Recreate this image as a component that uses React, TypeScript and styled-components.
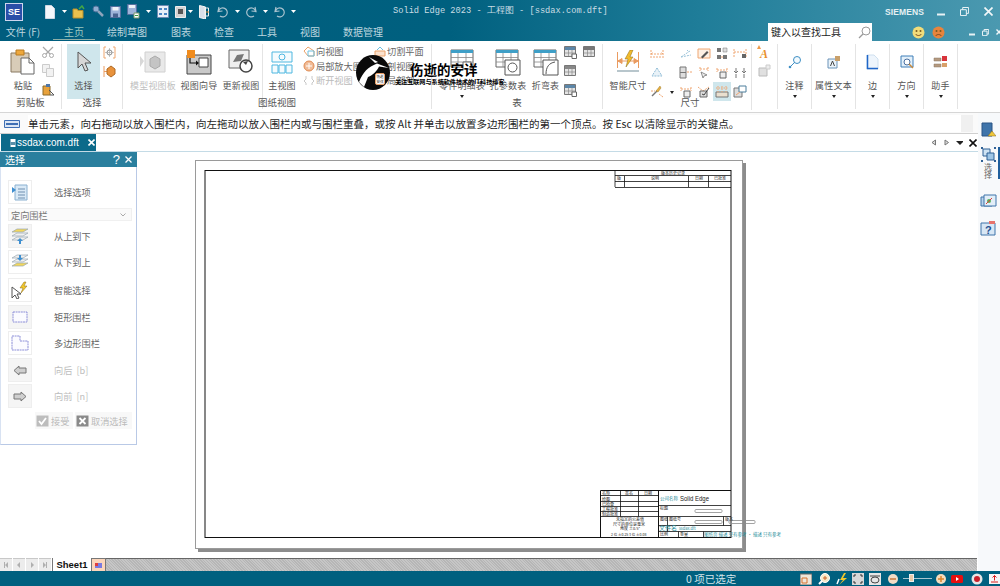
import React from "react";
import styled, { createGlobalStyle } from "styled-components";

const CJK = `"Noto Sans CJK SC", "Liberation Sans", sans-serif`;

const GlobalStyle = createGlobalStyle`
  html, body { margin: 0; padding: 0; background: #fff; }
  body { font-family: ${CJK}; }
`;

const Screen = styled.div`
  position: relative;
  width: 1000px;
  height: 586px;
  overflow: hidden;
  display: flex;
  flex-direction: column;
  background: #fff;
`;

/* title bar */
const TitleBar = styled.header`
  height: 41px;
  flex: none;
  display: flex;
  flex-direction: column;
  color: #fff;
  background: linear-gradient(90deg, #005d7e 0%, #00607f 45%, #1f7d99 70%, #4b99b0 100%);
`;
const TitleTop = styled.div`
  position: relative;
  height: 23px;
  display: flex;
  align-items: center;
`;
const Logo = styled.div`
  width: 18px;
  height: 18px;
  margin: 0 22px 0 5px;
  flex: none;
  box-sizing: border-box;
  border: 1px solid #cdd6ee;
  background: #2a4ea8;
  color: #fff;
  font: bold 9px/16px "Liberation Sans", sans-serif;
  text-align: center;
`;
const QuickSlot = styled.span<{ $w: number }>`
  width: ${(p) => p.$w}px;
  flex: none;
  display: flex;
  align-items: center;
`;
const Title = styled.div`
  position: absolute;
  left: 393px;
  top: 5px;
  font: 8.7px/13px "Liberation Mono", monospace;
  color: #c9dde4;
  white-space: pre;
`;
const Siemens = styled.span`
  margin-left: auto;
  font: bold 8.5px "Liberation Sans", sans-serif;
  letter-spacing: 0.1px;
  color: #e6f0f3;
`;
const WinControls = styled.div<{ $gap: number; $ml: number; $mr?: number }>`
  display: flex;
  align-items: center;
  gap: ${(p) => p.$gap}px;
  margin: 0 ${(p) => p.$mr ?? 0}px 0 ${(p) => p.$ml}px;
`;
const TitleBottom = styled.div`
  height: 18px;
  display: flex;
  align-items: center;
`;
const TabLabel = styled.span<{ $active?: boolean; $w: number; $ml: number }>`
  position: relative;
  width: ${(p) => p.$w}px;
  margin-left: ${(p) => p.$ml}px;
  flex: none;
  font-size: 10px;
  line-height: 18px;
  text-align: center;
  white-space: nowrap;
  color: ${(p) => (p.$active ? "#9cc8c0" : "#bcd6df")};
  ${(p) =>
    p.$active &&
    `&::after {
      content: "";
      position: absolute;
      left: 0;
      right: 0;
      bottom: 1px;
      height: 1px;
      background: #8fb0a8;
    }`}
`;
const SearchBox = styled.div`
  margin-left: auto;
  width: 104px;
  height: 18px;
  box-sizing: border-box;
  background: #fff;
  color: #222;
  font-size: 10px;
  line-height: 18px;
  padding-left: 3px;
  display: flex;
  align-items: center;
  justify-content: space-between;
  padding-right: 1px;
  flex: none;
`;
const Smileys = styled.div`
  margin-left: 40px;
  display: flex;
  align-items: center;
  gap: 7px;
  width: 88px;
  flex: none;
`;

/* ribbon */
const Ribbon = styled.nav`
  height: 71px;
  flex: none;
  box-sizing: border-box;
  padding-top: 3px;
  display: flex;
  background: #fff;
`;
const Group = styled.section<{ $w: number }>`
  width: ${(p) => p.$w}px;
  height: 65px;
  flex: none;
  box-sizing: border-box;
  display: flex;
  flex-direction: column;
  border-right: 1px solid #e4e4e4;
`;
const GroupBody = styled.div<{ $pad?: number }>`
  height: 52px;
  display: flex;
  padding-left: ${(p) => p.$pad ?? 0}px;
`;
const GroupLabel = styled.div`
  height: 13px;
  font-size: 9.5px;
  line-height: 13px;
  text-align: center;
  color: #555;
`;
const Tool = styled.div<{ $w: number; $active?: boolean; $after?: number; $dim?: boolean }>`
  width: ${(p) => p.$w}px;
  height: 55px;
  flex: none;
  margin-right: ${(p) => p.$after ?? 0}px;
  display: flex;
  flex-direction: column;
  align-items: center;
  background: ${(p) => (p.$active ? "#cfe6ec" : "transparent")};
  color: ${(p) => (p.$dim ? "#c0c0c0" : "#555")};
`;
const ToolIcon = styled.div`
  height: 32px;
  margin-top: 2px;
  display: flex;
  align-items: center;
  justify-content: center;
`;
const ToolLabel = styled.div`
  height: 14px;
  margin-top: 1px;
  font-size: 9px;
  line-height: 14px;
  letter-spacing: 0.2px;
  white-space: nowrap;
`;
const Caret = styled.i`
  display: block;
  margin-top: 2px;
  width: 0;
  height: 0;
  border-left: 2.5px solid transparent;
  border-right: 2.5px solid transparent;
  border-top: 3px solid #222;
`;
const SideIcons = styled.div<{ $w: number; $left: number; $gap: number }>`
  width: ${(p) => p.$w}px;
  margin-left: ${(p) => p.$left}px;
  flex: none;
  display: flex;
  flex-direction: column;
  align-items: center;
  padding-top: 2px;
  gap: ${(p) => p.$gap}px;
`;
const VSep = styled.div<{ $left: number; $right: number }>`
  width: 1px;
  height: 65px;
  flex: none;
  background: #e4e4e4;
  margin: 0 ${(p) => p.$right}px 0 ${(p) => p.$left}px;
`;
const ViewList = styled.div<{ $w: number }>`
  width: ${(p) => p.$w}px;
  flex: none;
  display: flex;
  flex-direction: column;
`;
const ViewItem = styled.div<{ $dim?: boolean }>`
  height: 14.5px;
  display: flex;
  align-items: center;
  gap: 1px;
  font-size: 9.2px;
  white-space: nowrap;
  color: ${(p) => (p.$dim ? "#bbb" : "#666")};
`;
const DimGrid = styled.div`
  flex: none;
  margin-left: 2px;
  display: grid;
  grid-template-columns: 18px 11px 18px 18px 18px 18px;
  grid-auto-rows: 19px;
`;
const DimCell = styled.div<{ $on?: boolean }>`
  display: flex;
  align-items: center;
  justify-content: center;
  background: ${(p) => (p.$on ? "#cfe6ec" : "transparent")};
`;
const TextStyles = styled.div`
  margin-left: 2px;
  width: 24px;
  flex: none;
  height: 65px;
  border-left: 1px solid #e4e4e4;
  display: flex;
  flex-direction: column;
  align-items: center;
  gap: 4px;
  padding-top: 1px;
`;

/* workspace */
const Workspace = styled.div`
  flex: 1;
  display: flex;
  min-height: 0;
  border-top: 1px solid #d6d6d6;
`;
const MainColumn = styled.div`
  width: 978px;
  flex: none;
  display: flex;
  flex-direction: column;
`;
const CommandBar = styled.div`
  height: 21px;
  flex: none;
  box-sizing: border-box;
  display: flex;
  align-items: flex-start;
  padding: 2px 5px 0 4px;
  border-bottom: 1px solid #cfcfcf;
  background: #fafafa;
`;
const CommandIcon = styled.div`
  width: 24px;
  height: 17px;
  flex: none;
  display: flex;
  align-items: center;
`;
const CommandText = styled.div`
  flex: 1;
  height: 17px;
  display: flex;
  justify-content: space-between;
  background: #fff;
  color: #1e1e1e;
  font-size: 10.5px;
  line-height: 17px;
  white-space: nowrap;
`;
const CommandScroll = styled.span`
  width: 12px;
  background: #f0f0f0;
`;
const DocBar = styled.div`
  height: 18px;
  flex: none;
  box-sizing: border-box;
  display: flex;
  align-items: flex-end;
  padding-left: 1px;
  background: #fff;
  border-bottom: 1px solid #c4dbe6;
`;
const DocTab = styled.div`
  width: 95px;
  height: 17px;
  box-sizing: border-box;
  display: flex;
  align-items: center;
  gap: 1px;
  padding: 0 1px 0 9px;
  background: #0c6a8a;
  color: #fff;
  font: 10px "Liberation Sans", sans-serif;
`;
const DocClose = styled.span`
  margin-left: auto;
  display: flex;
`;
const DocControls = styled.div`
  margin-left: auto;
  height: 17px;
  display: flex;
  align-items: center;
  gap: 6px;
  padding-right: 1px;
`;
const MainRow = styled.div`
  flex: 1;
  display: flex;
  min-height: 0;
`;

/* selection panel */
const Panel = styled.aside`
  width: 137px;
  height: 293px;
  flex: none;
  box-sizing: border-box;
  border: 1px solid #b9c9e6;
  border-top: none;
  border-left-color: #d8e2f2;
  background: #fff;
`;
const PanelHead = styled.div`
  height: 15px;
  margin-left: -1px;
  margin-right: -1px;
  display: flex;
  align-items: center;
  padding: 0 5px;
  gap: 5px;
  background: #2a7f9e;
  color: #fff;
  font-size: 10px;
`;
const PanelTitle = styled.span`
  margin-right: auto;
`;
const HeadGlyph = styled.span`
  font: 13px/15px "Liberation Sans", sans-serif;
`;
const PanelBody = styled.div`
  padding: 13px 4px 0 7px;
`;
const PanelRow = styled.div<{ $mt: number; $dim?: boolean }>`
  height: 24px;
  margin-top: ${(p) => p.$mt}px;
  display: flex;
  align-items: center;
  gap: 22px;
  font-size: 9.2px;
  white-space: pre;
  color: ${(p) => (p.$dim ? "#bdbdbd" : "#666")};
`;
const PanelIcon = styled.div<{ $flat?: boolean }>`
  width: 24px;
  height: 24px;
  flex: none;
  box-sizing: border-box;
  display: flex;
  align-items: center;
  justify-content: center;
  background: ${(p) => (p.$flat ? "#f5f5f5" : "#fff")};
  border: 1px solid #eeeeee;
`;
const PanelSelect = styled.div`
  height: 13px;
  margin-top: 4px;
  box-sizing: border-box;
  display: flex;
  align-items: center;
  justify-content: space-between;
  padding: 0 5px 0 2px;
  background: #fafafa;
  border: 1px solid #f0f0f0;
  color: #777;
  font-size: 9.2px;
`;
const PanelActions = styled.div`
  margin-top: 4px;
  padding-left: 27px;
  display: flex;
  gap: 2px;
`;
const PanelAction = styled.div<{ $w: number }>`
  width: ${(p) => p.$w}px;
  height: 17px;
  box-sizing: border-box;
  display: flex;
  align-items: center;
  gap: 2px;
  padding-left: 1px;
  background: #f8f8f8;
  color: #bbb;
  font-size: 9.2px;
  white-space: nowrap;
`;

/* sheet */
const Canvas = styled.main`
  flex: 1;
  background: #fff;
  padding: 9px 0 0 59px;
`;
const Sheet = styled.div`
  width: 546px;
  height: 387px;
  background: #fff;
  box-shadow: 0 0 0 1px #9a9a9a, 3px 3px 0 1px #8c8c8c;
`;
const SheetDrawing = styled.svg`
  display: block;
  overflow: visible;
`;

/* sheet tabs */
const SheetTabs = styled.div`
  height: 13px;
  flex: none;
  display: flex;
  align-items: stretch;
  padding-right: 1px;
  background: #fff;
`;
const NavButton = styled.span`
  width: 12px;
  margin-right: 1px;
  flex: none;
  display: flex;
  align-items: center;
  justify-content: center;
  background: #ececec;
  border-top: 1px solid #c8c8c8;
`;
const SheetTab = styled.span`
  width: 38px;
  flex: none;
  text-align: center;
  color: #111;
  font: bold 9.5px/13px "Liberation Sans", sans-serif;
  background: #fff;
  border-left: 1px solid #777;
`;
const NewSheetTab = styled.span`
  width: 13px;
  flex: none;
  display: flex;
  align-items: center;
  justify-content: center;
  background: #fbd5ba;
  border-top: 1px solid #777;
  border-left: 1px solid #777;
  border-right: 1px solid #777;
`;
const SheetFill = styled.span`
  flex: 1;
  border-top: 1px solid #666;
  background: repeating-linear-gradient(45deg, #b6b6b6 0 1px, #c6c6c6 1px 2px);
`;

/* right strip */
const SideStrip = styled.aside`
  flex: 1;
  display: flex;
  flex-direction: column;
  align-items: center;
  background: #f7f9fb;
  padding-top: 9px;
`;
const SideTab = styled.div<{ $mt: number; $on?: boolean }>`
  width: 22px;
  margin-top: ${(p) => p.$mt}px;
  box-sizing: border-box;
  padding: 0 2px;
  display: flex;
  flex-direction: column;
  align-items: center;
  border-right: 2px solid ${(p) => (p.$on ? "#1f5f9d" : "transparent")};
`;
const SideTabText = styled.span`
  font-size: 8px;
  line-height: 9px;
  color: #666;
  writing-mode: vertical-rl;
  margin-top: 1px;
`;

/* status bar */
const StatusBar = styled.footer`
  height: 15px;
  flex: none;
  display: flex;
  align-items: center;
  background: #00607f;
`;
const StatusText = styled.span`
  margin-left: 686px;
  width: 114px;
  flex: none;
  color: #d5e5ea;
  font-size: 10.5px;
  white-space: nowrap;
`;
const StatusIcon = styled.span<{ $w: number }>`
  width: ${(p) => p.$w}px;
  flex: none;
  display: flex;
  align-items: center;
`;
const ZoomTrack = styled.span`
  position: relative;
  width: 29px;
  height: 1px;
  margin: 0 3px 0 4px;
  flex: none;
  background: #a8c5cf;
`;
const ZoomThumb = styled.span`
  position: absolute;
  left: 6px;
  top: -4px;
  width: 5px;
  height: 8px;
  background: #e8c9a8;
  border: 1px solid #eee;
  box-sizing: border-box;
`;

/* watermark */
const Watermark = styled.div`
  position: absolute;
  left: 356px;
  top: 55px;
  width: 150px;
  height: 36px;
  display: flex;
  color: #000;
`;
const WatermarkBadge = styled.div`
  position: relative;
  width: 34px;
  height: 35px;
  border-radius: 50%;
  flex: none;
  background: #0a0a0a;
`;
const BadgeText = styled.span`
  position: absolute;
  left: 19px;
  top: 18px;
  width: 10px;
  height: 12px;
  box-sizing: border-box;
  border: 1px solid #e9a06a;
  border-radius: 2px;
  background: #fff;
  color: #111;
  font-size: 3.5px;
  line-height: 5px;
  text-align: center;
`;
const WatermarkTitle = styled.div`
  margin: 5px 0 0 20px;
  font-size: 13.5px;
  line-height: 18px;
  font-weight: 700;
  white-space: nowrap;
`;
const WatermarkSub = styled.div`
  position: absolute;
  left: 39px;
  top: 23px;
  font-size: 6.1px;
  line-height: 8px;
  font-weight: 700;
  white-space: nowrap;
`;

/* ---------- drawings ---------- */
type IconProps = { w?: number; h?: number; children?: React.ReactNode };
const G = ({ w = 12, h = 12, children }: IconProps) => (
  <svg width={w} height={h} viewBox={`0 0 ${w} ${h}`} style={{ display: "block", flex: "none" }}>
    {children}
  </svg>
);

const DocIcon = () => (
  <G w={10} h={14}>
    <path d="M.5.5h6l3 3v10H.5z" fill="#f4f6fa" stroke="#cfd6e2" />
  </G>
);
const OpenIcon = () => (
  <G w={13} h={14}>
    <path d="M1 4h4l1 1.500h5V13H1z" fill="#e9c14e" stroke="#b88f2a" />
    <path d="M7 4l3-3 2 3" fill="none" stroke="#44a744" strokeWidth="1.500" />
  </G>
);
const FindIcon = () => (
  <G w={12} h={13}>
    <circle cx="4" cy="4" r="3" fill="#8faed0" stroke="#4a6f99" />
    <path d="M6 6l5 5" stroke="#8ea4bc" strokeWidth="2.500" />
  </G>
);
const SaveIcon = () => (
  <G w={11} h={12}>
    <path d="M.5.500h10v11H.5z" fill="#9db3d9" stroke="#54709f" />
    <path d="M2.500 1h6v3.500h-6z" fill="#eef2f8" />
    <path d="M3 7.500h5v4H3z" fill="#4a6390" />
  </G>
);
const SaveAsIcon = () => (
  <G w={13} h={15}>
    <path d="M.5.500h9v10h-9z" fill="#9db3d9" stroke="#54709f" />
    <path d="M2 1h6v3H2z" fill="#eef2f8" />
    <path d="M7 9h5v5H7z" fill="#fff" stroke="#7a9a6c" />
    <path d="M8 11.500h3" stroke="#3c9a3c" />
  </G>
);
const SmallCaret = ({ color = "#fff" }: { color?: string }) => (
  <G w={5} h={3}>
    <path d="M0 0h5L2.500 3z" fill={color} />
  </G>
);
const PropsIcon = () => (
  <G w={12} h={13}>
    <path d="M.5.500h11v12H.5z" fill="#eaf0f8" stroke="#6d8bb3" />
    <path d="M2 3h3v2H2zM7 3h3v2H7zM2 8h3v2H2zM7 8h3v2H7z" fill="#4c86c4" />
  </G>
);
const BoardIcon = () => (
  <G w={11} h={13}>
    <path d="M.5 1.500h10v11H.5z" fill="#d4d4d4" stroke="#eee" />
    <path d="M3 4h5v5H3z" fill="#555" />
  </G>
);
const ExitIcon = () => (
  <G w={10} h={14}>
    <path d="M.5.500l6 1.500v12l-6-1.500z" fill="#d9dfe8" stroke="#f5f5f5" />
    <path d="M6 3h3.500v8H6z" fill="none" stroke="#f0f0f0" />
    <path d="M7 7h3" stroke="#e58a2e" />
  </G>
);
const UndoIcon = ({ flip }: { flip?: boolean }) => (
  <G w={12} h={13}>
    <path
      d={flip ? "M10 2L11 6.500 6.500 6M10.500 6A4.500 4.500 0 1 0 9 11" : "M2 2L1 6.500 5.500 6M1.500 6A4.500 4.500 0 1 1 3 11"}
      fill="none"
      stroke="#a9c3cf"
      strokeWidth="1.200"
    />
  </G>
);
const WinMin = ({ w = 8 }: { w?: number }) => (
  <G w={w} h={8}>
    <path d={`M0 6.500h${w}`} stroke="#e8f2f5" strokeWidth="2" />
  </G>
);
const WinRestore = ({ s = 9 }: { s?: number }) => (
  <G w={s} h={s}>
    <path d={`M.5 ${s * 0.3}h${s * 0.65}v${s * 0.65}H.5z M${s * 0.3} ${s * 0.3}V.5h${s * 0.65}v${s * 0.65}H${s * 0.7}`} fill="none" stroke="#e8f2f5" />
  </G>
);
const WinClose = ({ s = 9, c = "#f2f7f9", sw = 1.7 }: { s?: number; c?: string; sw?: number }) => (
  <G w={s} h={s}>
    <path d={`M.5.5L${s - 0.5} ${s - 0.5}M${s - 0.5} .5L.5 ${s - 0.5}`} stroke={c} strokeWidth={sw} />
  </G>
);
const SearchGlass = () => (
  <G w={13} h={13}>
    <circle cx="8" cy="5" r="4" fill="none" stroke="#9a9a9a" />
    <path d="M5 8L1 12" stroke="#9a9a9a" strokeWidth="1.300" />
  </G>
);
const Face = ({ happy }: { happy?: boolean }) => (
  <G w={13} h={13}>
    <circle cx="6.500" cy="6.500" r="6" fill={happy ? "#f2dc7a" : "#e8843c"} />
    <circle cx="4.500" cy="5" r="1" fill="#7a5a20" />
    <circle cx="8.500" cy="5" r="1" fill="#7a5a20" />
    <path d={happy ? "M3.500 8c1.500 2 4.500 2 6 0" : "M3.500 10c1.500-2 4.500-2 6 0"} fill="none" stroke="#7a4a20" />
  </G>
);

const PasteIcon = () => (
  <G w={26} h={26}>
    <path d="M1 4h18v19H1z" fill="#d8ccb8" stroke="#8a7a62" />
    <path d="M6 1h8v5H6z" fill="#eea83c" stroke="#b87a20" />
    <path d="M11 9h8l5 5v11H11z" fill="#fff" stroke="#666" />
    <path d="M19 9v5h5" fill="none" stroke="#666" />
  </G>
);
const ScissorsIcon = () => (
  <G w={12} h={12}>
    <path d="M1 1l7 7M11 1L4 8" stroke="#a8a8a8" strokeWidth="1.200" />
    <circle cx="2.500" cy="9.500" r="2" fill="none" stroke="#a8a8a8" />
    <circle cx="9.500" cy="9.500" r="2" fill="none" stroke="#a8a8a8" />
  </G>
);
const CopyIcon = () => (
  <G w={12} h={13}>
    <path d="M.5.500h7v8h-7z" fill="#f2f2f2" stroke="#ccc" />
    <path d="M4.500 4.500h7v8h-7z" fill="#f2f2f2" stroke="#ccc" />
  </G>
);
const BrushIcon = () => (
  <G w={13} h={13}>
    <path d="M1 3h7v9H1z" fill="#e8a23c" stroke="#8a6a2a" />
    <path d="M4 1h4v3H4z" fill="#4f77a8" />
    <path d="M7 7l5 5M8 12h4" stroke="#555" />
  </G>
);
const CursorIcon = () => (
  <G w={16} h={22}>
    <path d="M2 1v16l4-4 3 7 3-1-3-7h6z" fill="#d7d7d7" stroke="#555" />
  </G>
);
const TargetIcon = () => (
  <G w={13} h={13}>
    <path d="M3 1H1v11h2M10 1h2v11h-2" fill="none" stroke="#efa770" />
    <circle cx="6.500" cy="6.500" r="2.500" fill="none" stroke="#8a8a8a" />
    <path d="M6.500 2v9M2 6.500h9" stroke="#a0a0a0" strokeWidth=".6" />
  </G>
);
const PickIcon = () => (
  <G w={13} h={13}>
    <path d="M1 1v11M1 6.500h3" stroke="#ea9b60" />
    <path d="M4 4l4-3 4 3v5l-4 3-4-3z" fill="#e8923c" stroke="#b06a24" />
  </G>
);
const PaletteIcon = () => (
  <G w={26} h={22}>
    <path d="M5 1h20v20H5z" fill="#e9e9e9" stroke="#d0d0d0" />
    <path d="M0 5l4 5-4 6z" fill="#d8d8d8" />
    <path d="M10 8l5-3 5 3v7l-5 3-5-3z" fill="#c4c4c4" stroke="#aaa" />
  </G>
);
const WizardIcon = () => (
  <G w={26} h={26}>
    <path d="M1 6h24v19H1z" fill="#c9c9c9" stroke="#444" />
    <path d="M13 9h9v9h-9z" fill="#fff" stroke="#444" />
    <path d="M1 1h8v8H1z" fill="#f08c1e" />
    <path d="M4 9v5h8" fill="none" stroke="#111" strokeWidth="1.200" />
    <path d="M10 11.500l3 2.500-3 2.500z" fill="#111" />
  </G>
);
const UpdateIcon = () => (
  <G w={26} h={26}>
    <path d="M1 1h20v18H1z" fill="#efefef" stroke="#666" />
    <path d="M5 13l4-7 7-1-3 7z" fill="#777" />
    <circle cx="18" cy="17" r="6" fill="#fff" stroke="#444" strokeWidth="1.500" />
    <path d="M15 13l3 3 2-4z" fill="#444" />
  </G>
);
const MainViewIcon = () => (
  <G w={22} h={23}>
    <path d="M1 1h20v10H1zM1 14h6v8H1zM8 14h6v8H8zM15 14h6v8h-6z" fill="#f4fbfe" stroke="#4fb7e0" />
    <circle cx="11" cy="6" r="3" fill="none" stroke="#4fb7e0" />
  </G>
);
const MiniDirIcon = () => (
  <G w={12} h={11}>
    <path d="M1 5l4-4 6 4v5H5z" fill="none" stroke="#eaa26a" />
    <path d="M5 5h6v5H5z" fill="none" stroke="#6ec0e0" />
  </G>
);
const MiniZoomIcon = () => (
  <G w={12} h={12}>
    <circle cx="6" cy="6" r="5" fill="#f0bc98" stroke="#e08a50" />
    <path d="M3 6h6M6 3v6" stroke="#fff" />
  </G>
);
const MiniBreakIcon = () => (
  <G w={12} h={11}>
    <path d="M3 1v3l-2 2 2 2v2M9 1v3l2 2-2 2v2" fill="none" stroke="#c8c8c8" />
  </G>
);
const MiniCutIcon = () => (
  <G w={12} h={11}>
    <path d="M3 4l3-3 3 3" fill="none" stroke="#6ec0e0" />
    <path d="M1 5h10v5H1z" fill="#fbe2ce" stroke="#eaa26a" />
  </G>
);
const TableIcon = ({ detail }: { detail?: "part" | "hole" | "bend" }) => (
  <G w={detail === "part" ? 24 : 26} h={27}>
    <path d="M1 1h22v17H1z" fill="#fff" stroke="#666" />
    <path d="M1 1h22v3H1z" fill="#3f9fc7" />
    <path d="M1 8.500h22M1 13h22M8 4v14M16 4v14" stroke="#888" strokeWidth=".8" />
    {detail === "hole" && (
      <>
        <path d="M10 11h15v15H10z" fill="#fff" stroke="#555" />
        <circle cx="17.500" cy="18.500" r="4.500" fill="none" stroke="#555" />
      </>
    )}
    {detail === "bend" && (
      <>
        <path d="M10 11h15v15H10z" fill="#fff" stroke="#555" />
        <path d="M13 25c0-7 3-11 9-12" fill="none" stroke="#555" />
      </>
    )}
    {detail === "part" && <path d="M13 13h8v7h-8z" fill="#fff" stroke="#666" />}
  </G>
);
const MiniTable = ({ tint = "#5c86a8", badge }: { tint?: string; badge?: boolean }) => (
  <G w={13} h={13}>
    <path d="M.5.500h11v10H.5z" fill="#e4e4e4" stroke="#777" />
    <path d="M1 1h10v3H1z" fill={tint} />
    <path d="M1 7h10M4.500 4v6M8 4v6" stroke="#888" strokeWidth=".7" />
    {badge && <path d="M8 8h4.500v4.500H8z" fill="#fff" stroke="#666" />}
  </G>
);
const SmartDimIcon = () => (
  <G w={24} h={24}>
    <path d="M1.500 2v16M22.500 2v16" stroke="#ea9b60" />
    <path d="M2 11h20M2 11l4-2.500v5zM22 11l-4-2.500v5z" stroke="#ea9b60" fill="#ea9b60" />
    <path d="M14 0l-5 9h3l-2 8 7-10h-3l3-7z" fill="#f2bb2c" stroke="#8a6a1a" strokeWidth=".5" />
    <path d="M1 21h22" stroke="#b8c6cc" strokeWidth="2" />
  </G>
);
type DimKind = "span" | "tri" | "star" | "angle" | "edit" | "boxes" | "ends" | "plate" | "pins" | "chamfer" | "shield" | "stack" | "screen" | "dim" | "check";
const DimIcon = ({ kind }: { kind: DimKind }) => {
  const o = "#efa672";
  return (
    <G w={14} h={13}>
      {kind === "span" && <path d="M1 3v8M13 3v8M1 7l2-2M13 7l-2-2M1 7h12M3 10h8" fill="none" stroke={o} strokeDasharray="2 1" />}
      {kind === "tri" && <path d="M7 2l5 8H2z" fill="#e9f2f8" stroke="#8fbcd6" strokeDasharray="2 1" />}
      {kind === "star" && (
        <>
          <path d="M2 11l5-5" fill="none" stroke="#777" strokeWidth="1.400" />
          <path d="M10 1L6 6l2 1 3-4z" fill="#e8b040" stroke="#8a6a1a" strokeWidth=".4" />
          <path d="M1 6h4M9 9l4 3" stroke={o} strokeDasharray="2 1" />
        </>
      )}
      {kind === "angle" && <path d="M2 10l9-6M2 10l10-2M8 3l2 2" fill="none" stroke="#9cc4da" strokeDasharray="2 1" />}
      {kind === "edit" && (
        <>
          <path d="M1 2h12v9H1z" fill="#fdf0e4" stroke={o} />
          <path d="M4 10l6-6 1.500 1.500-6 6z" fill="#555" />
        </>
      )}
      {kind === "boxes" && (
        <>
          <path d="M2 1h4v4H2zM2 8h4v4H2zM8 8h4v4H8z" fill="#777" />
          <path d="M8 1h4v4H8z" fill="#ddd" stroke="#777" strokeWidth=".5" />
          <path d="M6 10h2" stroke={o} />
        </>
      )}
      {kind === "ends" && (
        <>
          <path d="M1 2v8M13 2v8M1 5h12" fill="none" stroke={o} strokeDasharray="2 1" />
          <path d="M9 7h4v4H9z" fill="#666" />
        </>
      )}
      {kind === "plate" && (
        <>
          <path d="M1 1h6v11H1z" fill="#ddd" stroke="#777" />
          <path d="M1 6.500h6" stroke="#777" />
          <path d="M8 6h5" stroke={o} strokeDasharray="2 1" />
        </>
      )}
      {kind === "pins" && <path d="M3 2v4M11 2v4M1 5l2 2 2-2M9 5l2 2 2-2M3 8v4M11 8v4" fill="none" stroke="#777" />}
      {kind === "chamfer" && (
        <>
          <path d="M3 1v4M11 1v4M3 3h8" fill="none" stroke={o} strokeDasharray="2 1" />
          <path d="M4 6l2 6 1-2 3-1z" fill="#eee" stroke="#666" strokeWidth=".7" />
        </>
      )}
      {kind === "shield" && (
        <>
          <path d="M2 2v4M12 2v4M2 4h10" fill="none" stroke={o} strokeDasharray="2 1" />
          <path d="M5 6h6v6H5z" fill="#eee" stroke="#666" />
        </>
      )}
      {kind === "stack" && (
        <>
          <path d="M1 3v8M13 3v8M1 6h12" fill="none" stroke={o} strokeDasharray="2 1" />
          <path d="M6 4h2v7H6z" fill="#555" />
        </>
      )}
      {kind === "check" && (
        <>
          <path d="M1 2l5 4 6-4" fill="none" stroke={o} strokeDasharray="2 1" />
          <path d="M3 6h7v6H3z" fill="#ddd" stroke="#666" />
          <path d="M5 9l2 1 5-7" fill="none" stroke="#444" />
        </>
      )}
      {kind === "screen" && (
        <>
          <path d="M1 7h12v5H1z" fill="#eadfcf" stroke="#777" />
          <path d="M3 1v6M7 1v6M11 1v6M1 3h12" stroke={o} strokeDasharray="1.500 1" />
        </>
      )}
      {kind === "dim" && (
        <>
          <path d="M1 3h8v9H1z" fill="#ddd" stroke="#777" />
          <path d="M6 1h7v6H6z" fill="#fff" stroke="#4d7f9c" />
          <path d="M3 10l4-3" stroke={o} />
        </>
      )}
    </G>
  );
};
const TextAIcon = () => (
  <G w={16} h={15}>
    <path d="M3 0l2 4H1z" fill="#ee9a4a" />
    <text x="4" y="13" fontFamily="Liberation Serif, serif" fontStyle="italic" fontWeight="700" fontSize="12" fill="#e8902c">
      A
    </text>
  </G>
);
const StyleDimIcon = () => (
  <G w={13} h={13}>
    <path d="M1 4h8v8H1z" fill="#e0e0e0" stroke="#bbb" />
    <path d="M8 1h4v4H8z" fill="#ededed" stroke="#ccc" />
  </G>
);
const NoteIcon = () => (
  <G w={14} h={14}>
    <circle cx="9" cy="5" r="3.500" fill="#f3fafe" stroke="#3f8fc4" />
    <path d="M7 7l-5 5" stroke="#3f8fc4" />
    <circle cx="2" cy="12" r="1.300" fill="#3f8fc4" />
  </G>
);
const AttrIcon = () => (
  <G w={14} h={14}>
    <path d="M1 4h9v9H1z" fill="#eaf3fa" stroke="#6b93b8" />
    <path d="M8 1h5v5H8z" fill="#c9a06a" />
    <path d="M3.500 11L5.500 6 7.500 11" fill="none" stroke="#444" />
  </G>
);
const EdgeIcon = () => (
  <G w={13} h={16}>
    <path d="M1 1h7l4 4v10H1z" fill="#eef5fc" stroke="#cfe0ef" />
    <path d="M1.500 1v13.500H12" fill="none" stroke="#1f66c8" strokeWidth="1.500" />
  </G>
);
const DirectionIcon = () => (
  <G w={14} h={15}>
    <path d="M1 1h12v11H1z" fill="#e3f0fa" stroke="#3f7fb8" />
    <circle cx="7" cy="7" r="3" fill="#fff" stroke="#4a6fa0" />
    <path d="M9 9l4 4" stroke="#c98a3c" strokeWidth="1.500" />
  </G>
);
const HelperIcon = () => (
  <G w={15} h={14}>
    <path d="M9 1h5v5H9z" fill="#d8343c" />
    <path d="M1 3h7v3H1zM1 9h7v3H1z" fill="#b59a80" stroke="#8a7460" strokeWidth=".5" />
    <path d="M9 8h5v4H9z" fill="#d8a06a" />
  </G>
);
const HintIcon = () => (
  <G w={16} h={8}>
    <path d="M.5.500h15v7H.5z" fill="#dbe6f4" stroke="#3f6fb4" />
    <path d="M2 3h12v2H2z" fill="#3f6fb4" />
  </G>
);
const FileGlyph = () => (
  <G w={6} h={8}>
    <path d="M.5 0h5v8h-5z" fill="#fff" />
    <path d="M.5 3h5v3h-5z" fill="#5a8fa8" />
  </G>
);
const Triangle = ({ dir, c }: { dir: "l" | "r" | "d"; c: string }) => (
  <G w={7} h={7}>
    {dir === "l" && <path d="M5.500 1v5L2 3.500z" fill="#ddd" stroke={c} />}
    {dir === "r" && <path d="M2 1v5l3.500-2.500z" fill="#ddd" stroke={c} />}
    {dir === "d" && <path d="M0 2h8L4 6z" fill={c} />}
  </G>
);
const OptionsIcon = () => (
  <G w={16} h={17}>
    <path d="M3 1h12v15H3z" fill="#d9e9f6" stroke="#8ab0d0" />
    <path d="M6 5h7M6 8h7M6 11h7M6 14h7" stroke="#6f8fb0" />
    <path d="M0 3l4 3-4 3z" fill="#3f8fd0" />
  </G>
);
const LayerIcon = ({ up }: { up?: boolean }) => (
  <G w={18} h={17}>
    {(up ? [10, 6, 2] : [2, 6, 10]).map((y, i) => (
      <path key={y} d={`M1 ${y + 2}l5-3h11l-5 3z`} fill={i === 0 ? "#f3d85c" : "#f0f0f0"} stroke="#9aa7b2" strokeWidth=".7" />
    ))}
    <path d={up ? "M9 1v5" : "M9 11v5"} stroke="#3f8fd0" strokeWidth="2" />
    <path d={up ? "M6 4l3 3 3-3" : "M6 13l3-3 3 3"} fill="#3f8fd0" />
  </G>
);
const SmartPickIcon = () => (
  <G w={18} h={18}>
    <path d="M1 6v11l3-3 2 4 2-1-2-4h4z" fill="#fff" stroke="#555" />
    <path d="M13 1l-4 6h3l-2 5 6-7h-3l2-4z" fill="#f2c82c" stroke="#8a6a1a" strokeWidth=".5" />
  </G>
);
const RectFenceIcon = () => (
  <G w={16} h={12}>
    <path d="M1 1h14v10H1z" fill="#fbfbff" stroke="#8d8fd8" strokeDasharray="2 .6" />
  </G>
);
const PolyFenceIcon = () => (
  <G w={18} h={16}>
    <path d="M1 1h8v5h8v9H1z" fill="#fbfbff" stroke="#8d8fd8" strokeDasharray="2 .6" />
  </G>
);
const BackArrow = ({ right }: { right?: boolean }) => (
  <G w={14} h={11}>
    <path d={right ? "M1 3h7V1l5 4.500L8 10V8H1z" : "M13 3H6V1L1 5.500 6 10V8h7z"} fill="#cfcfcf" stroke="#777" />
  </G>
);
const CheckBox = ({ cross }: { cross?: boolean }) => (
  <G w={13} h={12}>
    <rect x=".5" y=".5" width="12" height="11" fill={cross ? "#8a8a8a" : "#bdbdbd"} />
    <path d={cross ? "M3.500 3l6 6M9.500 3l-6 6" : "M3 6l2.500 3L10 3"} fill="none" stroke="#fff" strokeWidth="1.800" />
  </G>
);
const BookIcon = () => (
  <G w={15} h={15}>
    <path d="M1 1h10v13H1z" fill="#3f74aa" stroke="#2a5585" />
    <path d="M7 14l4-5 4 5z" fill="#f0c83c" stroke="#8a6a1a" strokeWidth=".5" />
  </G>
);
const SelectSideIcon = () => (
  <G w={15} h={15}>
    <path d="M2 2h7v7H2z" fill="#cfe3f3" stroke="#2f6095" />
    <path d="M6 6h7v7H6z" fill="#9fc6e6" stroke="#2f6095" />
    <path d="M0 0h2v2H0zM13 0h2v2h-2zM0 13h2v2H0zM13 13h2v2h-2z" fill="#2f6095" />
  </G>
);
const LayersSideIcon = () => (
  <G w={17} h={15}>
    <path d="M1 3h11v9H1z" fill="#b9d3ea" stroke="#3f74aa" />
    <path d="M4 1h12v11H4z" fill="#e2eef8" stroke="#3f74aa" />
    <circle cx="9" cy="7" r="2" fill="#5ab05a" />
    <path d="M6 10l6-6" stroke="#d8443c" />
  </G>
);
const HelpSideIcon = () => (
  <G w={16} h={16}>
    <path d="M1 3h14v12H1z" fill="#d7e7f5" stroke="#3f74aa" />
    <path d="M9 1h6v3H9z" fill="#e8736c" />
    <text x="5" y="14" fontFamily="Liberation Sans, sans-serif" fontWeight="700" fontSize="11" fill="#1f4f90">
      ?
    </text>
  </G>
);
const Chevron = () => (
  <G w={6} h={4}>
    <path d="M.5.500L3 3 5.500.500" fill="none" stroke="#aaa" />
  </G>
);
const StatusGlyph = ({ kind }: { kind: "sheet" | "zoom" | "pen" | "fit" | "view" | "minus" | "plus" | "yt" | "rec" | "up" }) => (
  <G w={12} h={12}>
    {kind === "sheet" && (
      <>
        <path d="M0 1h12v11H0z" fill="#efe5d8" stroke="#666" />
        <path d="M2 5h5v5H2z" fill="none" stroke="#d8702c" />
      </>
    )}
    {kind === "zoom" && (
      <>
        <circle cx="7" cy="5" r="4.500" fill="#f6e9c8" stroke="#fff" />
        <path d="M4 8L1 11" stroke="#fff" strokeWidth="2" />
        <path d="M5 5h4M7 3v4" stroke="#c8642c" />
      </>
    )}
    {kind === "pen" && (
      <>
        <path d="M8 0l-4 7h3l-4 5 8-7H7l3-5z" fill="#f2c82c" />
        <path d="M3 6l-2 5" stroke="#fff" strokeWidth="1.500" />
      </>
    )}
    {kind === "fit" && (
      <>
        <path d="M0 0h12v12H0z" fill="#d8d8d8" />
        <path d="M2 4V2h2M8 2h2v2M10 8v2H8M4 10H2V8" fill="none" stroke="#333" />
      </>
    )}
    {kind === "view" && (
      <>
        <path d="M0 0h12v12H0z" fill="#e6e6e6" />
        <ellipse cx="6" cy="7" rx="4" ry="3" fill="none" stroke="#444" />
        <path d="M1 3h10" stroke="#444" />
      </>
    )}
    {kind === "minus" && (
      <>
        <circle cx="6" cy="6" r="5" fill="#f2dcc6" />
        <path d="M3 6h6" stroke="#c87a3c" strokeWidth="1.500" />
      </>
    )}
    {kind === "plus" && (
      <>
        <circle cx="6" cy="6" r="5" fill="#f4dcbc" />
        <path d="M3 6h6M6 3v6" stroke="#d8842c" strokeWidth="1.500" />
      </>
    )}
    {kind === "yt" && (
      <>
        <rect x="0" y="2" width="12" height="8" rx="1.500" fill="#e60f0f" />
        <path d="M5 4l3 2-3 2z" fill="#fff" />
      </>
    )}
    {kind === "rec" && (
      <>
        <circle cx="6" cy="6" r="5.500" fill="#e6e6e6" />
        <circle cx="6" cy="6" r="3" fill="#c8202c" />
      </>
    )}
    {kind === "up" && (
      <>
        <path d="M0 1h11v10H0z" fill="#f6f6f6" />
        <path d="M5.500 2.500v5M3.500 4.500l2-2 2 2M2 9h7" fill="none" stroke="#d81e1e" />
      </>
    )}
  </G>
);

const NavGlyph = ({ d }: { d: string }) => (
  <G w={6} h={6}>
    <path d={d} fill="#b0b0b0" />
  </G>
);

const BirdBadge = () => (
  <G w={34} h={35}>
    <path d="M3 27C7 17 12 12 21 8.500L33 13l-10-1.500C21 16 17 20 12 22L8 32z" fill="#fff" />
    <path d="M19 8L13 2l9 5z" fill="#fff" />
  </G>
);

const SheetArt = () => {
  const s = "#111";
  return (
    <SheetDrawing width={546} height={387} viewBox="196 161 546 387">
      <g fill="none" stroke={s} strokeWidth="1">
        <rect x="205" y="170.500" width="526" height="367" />
        <path d="M615 170v17M615 175.500h116M615 181.500h116M615 187.500h116M624.500 176v11M688.500 176v11M708.500 176v11" strokeWidth=".8" />
        <path d="M600.500 537V490.500H731" />
        <path d="M658.500 490.500V537" />
        <path d="M600.500 495.500h58M600.500 501.500h58M600.500 506.500h58M600.500 511.500h58M600.500 516.500h58" strokeWidth=".8" />
        <path d="M620.500 490.500v26M638.500 490.500v26" strokeWidth=".8" />
        <path d="M658.500 505.500H731M658.500 516.500H731M658.500 525.500H731M658.500 531.500H731" strokeWidth=".8" />
        <path d="M667.500 516.500v15M723.500 516.500v9M678.500 531.500v6M703.500 531.500v6" strokeWidth=".8" />
      </g>
      <g fill="none" stroke="#8c8c8c" strokeWidth=".8">
        <rect x="695" y="509.500" width="27" height="3" rx="1" />
        <rect x="695" y="520.500" width="27" height="3" rx="1" />
        <rect x="729" y="520.500" width="26" height="3" rx="1" />
      </g>
      <g fontFamily={CJK} fontSize="4" fill="#222">
        <text x="661" y="174.500">版本历史记录</text>
        <text x="617" y="180">版</text>
        <text x="651" y="180">说明</text>
        <text x="695" y="180">日期</text>
        <text x="714" y="180">已批准</text>
        <text x="602" y="495">名称</text>
        <text x="625" y="494.500">签名</text>
        <text x="644" y="494.500">日期</text>
        <text x="602" y="500.500">绘图</text>
        <text x="602" y="505.500">已检查</text>
        <text x="602" y="510.500">工程批准</text>
        <text x="602" y="515.500">制造批准</text>
        <text x="616" y="521">未指定的公差值</text>
        <text x="613" y="525.500">尺寸的单位是毫米</text>
        <text x="620" y="530">角度 ±0.5°</text>
        <text x="611" y="535.500" fontSize="3.500">2 位 ±0.25 3 位 ±0.08</text>
        <text x="660" y="510">标题</text>
        <text x="660" y="521">图纸</text>
        <text x="669" y="521">图纸号</text>
        <text x="725" y="521">版本</text>
        <text x="660" y="536">比例</text>
        <text x="680" y="536">重量</text>
      </g>
      <text x="680" y="500.500" fontFamily="Liberation Sans, sans-serif" fontSize="8" textLength={29} lengthAdjust="spacingAndGlyphs" fill="#222">
        Solid Edge
      </text>
      <g fontFamily={CJK} fill="#2a8f9c">
        <text x="660" y="500" fontSize="4.500">公司名称</text>
        <text x="659" y="530" fontSize="6">文件名</text>
        <text x="679" y="530" fontSize="4">ssdax.dft</text>
        <text x="704" y="536" fontSize="4.500">图纸页 描述 只有参考 · 描述 只有参考</text>
      </g>
    </SheetDrawing>
  );
};

const App = () => (
  <Screen>
    <GlobalStyle />
    <TitleBar>
      <TitleTop>
        <Logo>SE</Logo>
        <QuickSlot $w={17}><DocIcon /></QuickSlot>
        <QuickSlot $w={10}><SmallCaret /></QuickSlot>
        <QuickSlot $w={20}><OpenIcon /></QuickSlot>
        <QuickSlot $w={18}><FindIcon /></QuickSlot>
        <QuickSlot $w={17}><SaveIcon /></QuickSlot>
        <QuickSlot $w={19}><SaveAsIcon /></QuickSlot>
        <QuickSlot $w={11}><SmallCaret /></QuickSlot>
        <QuickSlot $w={18}><PropsIcon /></QuickSlot>
        <QuickSlot $w={13}><BoardIcon /></QuickSlot>
        <QuickSlot $w={11}><SmallCaret /></QuickSlot>
        <QuickSlot $w={18}><ExitIcon /></QuickSlot>
        <QuickSlot $w={18}><UndoIcon /></QuickSlot>
        <QuickSlot $w={10}><SmallCaret /></QuickSlot>
        <QuickSlot $w={18}><UndoIcon flip /></QuickSlot>
        <QuickSlot $w={11}><SmallCaret /></QuickSlot>
        <QuickSlot $w={17}><UndoIcon /></QuickSlot>
        <QuickSlot $w={8}><SmallCaret /></QuickSlot>
        <Title>Solid Edge 2023 - 工程图 - [ssdax.com.dft]</Title>
        <Siemens>SIEMENS</Siemens>
        <WinControls $gap={15} $ml={13} $mr={7}>
          <WinMin />
          <WinRestore />
          <WinClose />
        </WinControls>
      </TitleTop>
      <TitleBottom>
        <TabLabel $w={46} $ml={0}>文件 (F)</TabLabel>
        <TabLabel $active $w={42} $ml={7}>主页</TabLabel>
        <TabLabel $w={40} $ml={12}>绘制草图</TabLabel>
        <TabLabel $w={19} $ml={24}>图表</TabLabel>
        <TabLabel $w={19} $ml={24}>检查</TabLabel>
        <TabLabel $w={19} $ml={24}>工具</TabLabel>
        <TabLabel $w={19} $ml={24}>视图</TabLabel>
        <TabLabel $w={40} $ml={24}>数据管理</TabLabel>
        <SearchBox>
          键入以查找工具
          <SearchGlass />
        </SearchBox>
        <Smileys>
          <Face happy />
          <Face />
          <WinControls $gap={7} $ml={17}>
            <WinMin w={6} />
            <WinRestore s={7} />
            <WinClose s={6} sw={1.4} />
          </WinControls>
        </Smileys>
      </TitleBottom>
    </TitleBar>

    <Ribbon>
      <Group $w={62}>
        <GroupBody $pad={8}>
          <Tool $w={30}>
            <ToolIcon><PasteIcon /></ToolIcon>
            <ToolLabel>粘贴</ToolLabel>
          </Tool>
          <SideIcons $w={14} $left={3} $gap={6}>
            <ScissorsIcon />
            <CopyIcon />
            <BrushIcon />
          </SideIcons>
        </GroupBody>
        <GroupLabel>剪贴板</GroupLabel>
      </Group>
      <Group $w={61}>
        <GroupBody $pad={5}>
          <Tool $w={33} $active>
            <ToolIcon><CursorIcon /></ToolIcon>
            <ToolLabel>选择</ToolLabel>
          </Tool>
          <SideIcons $w={14} $left={2} $gap={6}>
            <TargetIcon />
            <PickIcon />
          </SideIcons>
        </GroupBody>
        <GroupLabel>选择</GroupLabel>
      </Group>
      <Group $w={309}>
        <GroupBody $pad={7}>
          <Tool $w={46} $after={5} $dim>
            <ToolIcon><PaletteIcon /></ToolIcon>
            <ToolLabel>模型视图板</ToolLabel>
          </Tool>
          <Tool $w={36} $after={5}>
            <ToolIcon><WizardIcon /></ToolIcon>
            <ToolLabel>视图向导</ToolLabel>
          </Tool>
          <Tool $w={38}>
            <ToolIcon><UpdateIcon /></ToolIcon>
            <ToolLabel>更新视图</ToolLabel>
          </Tool>
          <VSep $left={2} $right={3} />
          <Tool $w={32} $after={5}>
            <ToolIcon><MainViewIcon /></ToolIcon>
            <ToolLabel>主视图</ToolLabel>
          </Tool>
          <ViewList $w={71}>
            <ViewItem><MiniDirIcon />向视图</ViewItem>
            <ViewItem><MiniZoomIcon />局部放大图</ViewItem>
            <ViewItem $dim><MiniBreakIcon />断开视图</ViewItem>
          </ViewList>
          <ViewList $w={55}>
            <ViewItem><MiniCutIcon />切割平面</ViewItem>
            <ViewItem><MiniCutIcon />剖视图</ViewItem>
            <ViewItem><MiniCutIcon />局部剖</ViewItem>
          </ViewList>
        </GroupBody>
        <GroupLabel>图纸视图</GroupLabel>
      </Group>
      <Group $w={171}>
        <GroupBody $pad={7}>
          <Tool $w={46} $after={5}>
            <ToolIcon><TableIcon detail="part" /></ToolIcon>
            <ToolLabel>零件明细表</ToolLabel>
            <Caret />
          </Tool>
          <Tool $w={36} $after={6}>
            <ToolIcon><TableIcon detail="hole" /></ToolIcon>
            <ToolLabel>孔参数表</ToolLabel>
          </Tool>
          <Tool $w={27}>
            <ToolIcon><TableIcon detail="bend" /></ToolIcon>
            <ToolLabel>折弯表</ToolLabel>
          </Tool>
          <SideIcons $w={13} $left={5} $gap={6}>
            <MiniTable badge />
            <MiniTable tint="#888" />
            <MiniTable badge />
          </SideIcons>
          <SideIcons $w={13} $left={6} $gap={6}>
            <MiniTable tint="#777" />
          </SideIcons>
        </GroupBody>
        <GroupLabel>表</GroupLabel>
      </Group>
      <Group $w={175}>
        <GroupBody $pad={7}>
          <Tool $w={36}>
            <ToolIcon><SmartDimIcon /></ToolIcon>
            <ToolLabel>智能尺寸</ToolLabel>
          </Tool>
          <DimGrid>
            <DimCell><DimIcon kind="span" /></DimCell>
            <DimCell />
            <DimCell><DimIcon kind="angle" /></DimCell>
            <DimCell><DimIcon kind="edit" /></DimCell>
            <DimCell><DimIcon kind="boxes" /></DimCell>
            <DimCell><DimIcon kind="ends" /></DimCell>
            <DimCell><DimIcon kind="tri" /></DimCell>
            <DimCell />
            <DimCell><DimIcon kind="plate" /></DimCell>
            <DimCell><DimIcon kind="chamfer" /></DimCell>
            <DimCell><DimIcon kind="shield" /></DimCell>
            <DimCell><DimIcon kind="pins" /></DimCell>
            <DimCell><DimIcon kind="star" /></DimCell>
            <DimCell><Caret /></DimCell>
            <DimCell><DimIcon kind="shield" /></DimCell>
            <DimCell><DimIcon kind="check" /></DimCell>
            <DimCell $on><DimIcon kind="screen" /></DimCell>
            <DimCell><DimIcon kind="dim" /></DimCell>
          </DimGrid>
          <TextStyles>
            <TextAIcon />
            <StyleDimIcon />
          </TextStyles>
        </GroupBody>
        <GroupLabel>尺寸</GroupLabel>
      </Group>
      <Group $w={34}>
        <GroupBody>
          <Tool $w={33}>
            <ToolIcon><NoteIcon /></ToolIcon>
            <ToolLabel>注释</ToolLabel>
            <Caret />
          </Tool>
        </GroupBody>
      </Group>
      <Group $w={44}>
        <GroupBody>
          <Tool $w={43}>
            <ToolIcon><AttrIcon /></ToolIcon>
            <ToolLabel>属性文本</ToolLabel>
            <Caret />
          </Tool>
        </GroupBody>
      </Group>
      <Group $w={34}>
        <GroupBody>
          <Tool $w={33}>
            <ToolIcon><EdgeIcon /></ToolIcon>
            <ToolLabel>边</ToolLabel>
            <Caret />
          </Tool>
        </GroupBody>
      </Group>
      <Group $w={34}>
        <GroupBody>
          <Tool $w={33}>
            <ToolIcon><DirectionIcon /></ToolIcon>
            <ToolLabel>方向</ToolLabel>
            <Caret />
          </Tool>
        </GroupBody>
      </Group>
      <Group $w={34}>
        <GroupBody>
          <Tool $w={33}>
            <ToolIcon><HelperIcon /></ToolIcon>
            <ToolLabel>助手</ToolLabel>
            <Caret />
          </Tool>
        </GroupBody>
      </Group>
    </Ribbon>

    <Workspace>
      <MainColumn>
        <CommandBar>
          <CommandIcon><HintIcon /></CommandIcon>
          <CommandText>
            单击元素，向右拖动以放入围栏内，向左拖动以放入围栏内或与围栏重叠，或按 Alt 并单击以放置多边形围栏的第一个顶点。按 Esc 以清除显示的关键点。
            <CommandScroll />
          </CommandText>
        </CommandBar>
        <DocBar>
          <DocTab>
            <FileGlyph />
            ssdax.com.dft
            <DocClose><WinClose s={7} c="#fff" sw={1.600} /></DocClose>
          </DocTab>
          <DocControls>
            <Triangle dir="l" c="#777" />
            <Triangle dir="r" c="#777" />
            <Triangle dir="d" c="#222" />
            <WinClose s={8} c="#111" sw={1.600} />
          </DocControls>
        </DocBar>
        <MainRow>
          <Panel>
            <PanelHead>
              <PanelTitle>选择</PanelTitle>
              <HeadGlyph>?</HeadGlyph>
              <WinClose s={7} c="#fff" sw={1.300} />
            </PanelHead>
            <PanelBody>
              <PanelRow $mt={0}>
                <PanelIcon><OptionsIcon /></PanelIcon>
                选择选项
              </PanelRow>
              <PanelSelect>
                定向围栏
                <Chevron />
              </PanelSelect>
              <PanelRow $mt={3}>
                <PanelIcon $flat><LayerIcon /></PanelIcon>
                从上到下
              </PanelRow>
              <PanelRow $mt={2}>
                <PanelIcon><LayerIcon up /></PanelIcon>
                从下到上
              </PanelRow>
              <PanelRow $mt={4}>
                <PanelIcon><SmartPickIcon /></PanelIcon>
                智能选择
              </PanelRow>
              <PanelRow $mt={3}>
                <PanelIcon $flat><RectFenceIcon /></PanelIcon>
                矩形围栏
              </PanelRow>
              <PanelRow $mt={2}>
                <PanelIcon><PolyFenceIcon /></PanelIcon>
                多边形围栏
              </PanelRow>
              <PanelRow $mt={3} $dim>
                <PanelIcon $flat><BackArrow /></PanelIcon>
                {"向后  [b]"}
              </PanelRow>
              <PanelRow $mt={2} $dim>
                <PanelIcon $flat><BackArrow right /></PanelIcon>
                {"向前  [n]"}
              </PanelRow>
              <PanelActions>
                <PanelAction $w={38}><CheckBox />接受</PanelAction>
                <PanelAction $w={57}><CheckBox cross />取消选择</PanelAction>
              </PanelActions>
            </PanelBody>
          </Panel>
          <Canvas>
            <Sheet>
              <SheetArt />
            </Sheet>
          </Canvas>
        </MainRow>
        <SheetTabs>
          <NavButton><NavGlyph d="M1 0v6h1V0zM5 0v6L2 3z" /></NavButton>
          <NavButton><NavGlyph d="M4 0v6L1 3z" /></NavButton>
          <NavButton><NavGlyph d="M2 0v6l3-3z" /></NavButton>
          <NavButton><NavGlyph d="M1 0v6l3-3zM4 0v6h1V0z" /></NavButton>
          <SheetTab>Sheet1</SheetTab>
          <NewSheetTab>
            <G w={7} h={5}>
              <path d="M0 0h7v5H0z" fill="#7a7ae0" />
              <path d="M0 0h3v3H0z" fill="#e03c3c" />
            </G>
          </NewSheetTab>
          <SheetFill />
        </SheetTabs>
      </MainColumn>
      <SideStrip>
        <SideTab $mt={0}><BookIcon /></SideTab>
        <SideTab $mt={10} $on>
          <SelectSideIcon />
          <SideTabText>选择</SideTabText>
        </SideTab>
        <SideTab $mt={15}><LayersSideIcon /></SideTab>
        <SideTab $mt={11}><HelpSideIcon /></SideTab>
      </SideStrip>
    </Workspace>

    <StatusBar>
      <StatusText>0 项已选定</StatusText>
      <StatusIcon $w={18}><StatusGlyph kind="sheet" /></StatusIcon>
      <StatusIcon $w={18}><StatusGlyph kind="zoom" /></StatusIcon>
      <StatusIcon $w={16}><StatusGlyph kind="pen" /></StatusIcon>
      <StatusIcon $w={17}><StatusGlyph kind="fit" /></StatusIcon>
      <StatusIcon $w={18}><StatusGlyph kind="view" /></StatusIcon>
      <StatusGlyph kind="minus" />
      <ZoomTrack><ZoomThumb /></ZoomTrack>
      <StatusIcon $w={16}><StatusGlyph kind="plus" /></StatusIcon>
      <StatusIcon $w={20}><StatusGlyph kind="yt" /></StatusIcon>
      <StatusIcon $w={18}><StatusGlyph kind="rec" /></StatusIcon>
      <StatusGlyph kind="up" />
    </StatusBar>

    <Watermark>
      <WatermarkBadge>
        <BirdBadge />
        <BadgeText>伤逝安详</BadgeText>
      </WatermarkBadge>
      <WatermarkTitle>伤逝的安详</WatermarkTitle>
      <WatermarkSub>关注互联网与系统软件技术的IT科技博客</WatermarkSub>
    </Watermark>
  </Screen>
);

export default App;
